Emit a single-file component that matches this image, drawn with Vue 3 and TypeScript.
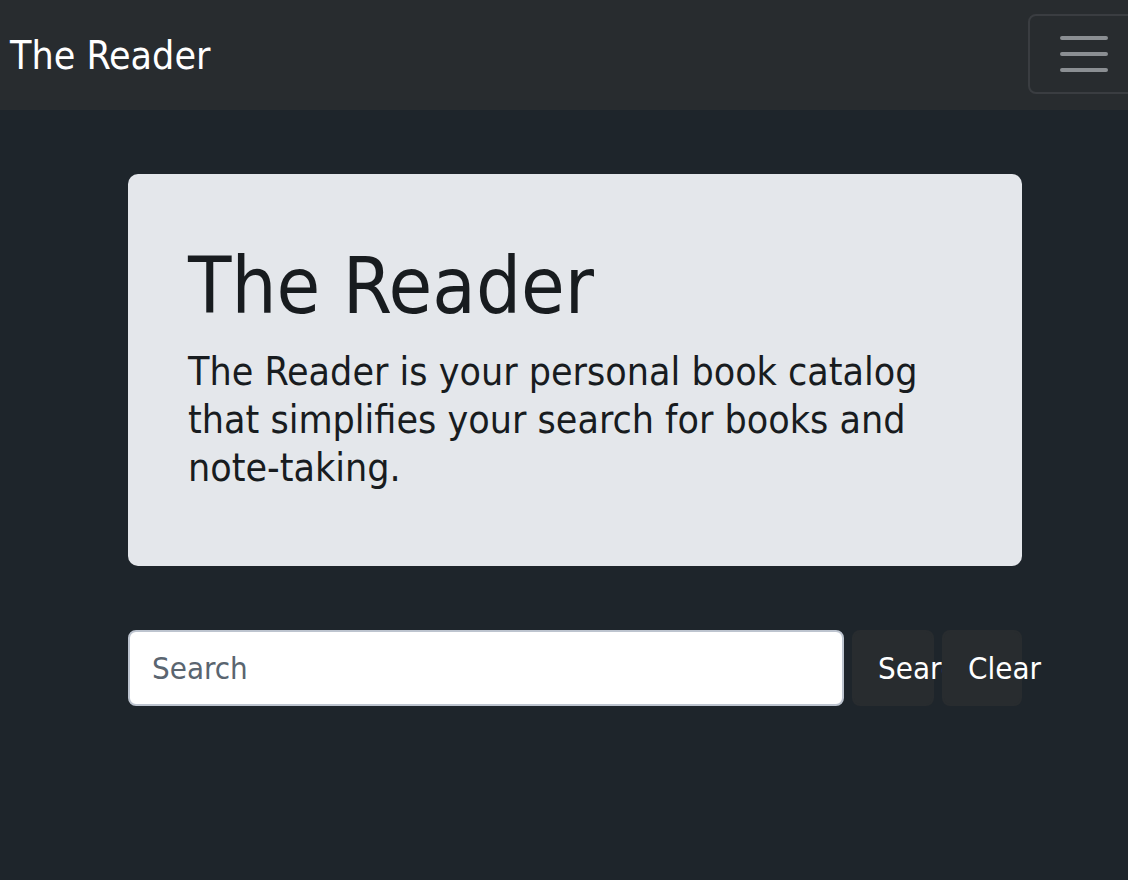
<script setup lang="ts">
import { ref } from 'vue'

const query = ref<string>('')

function clearQuery(): void {
  query.value = ''
}
</script>

<template>
  <div class="page">
    <header class="navbar">
      <a class="brand" href="#">The Reader</a>
      <button class="toggler" type="button" aria-label="Toggle navigation">
        <svg class="bars" viewBox="0 0 60 60" fill="none" stroke="#8b8f93" stroke-width="4" stroke-linecap="round" aria-hidden="true">
          <path d="M8 14H52M8 30H52M8 46H52" />
        </svg>
      </button>
    </header>

    <main class="content">
      <section class="hero">
        <h1>The Reader</h1>
        <p>The Reader is your personal book catalog that simplifies your search for books and note-taking.</p>
      </section>

      <form class="search" role="search" @submit.prevent>
        <input v-model="query" type="search" placeholder="Search" aria-label="Search" />
        <button class="action" type="submit">Search</button>
        <button class="action" type="button" @click="clearQuery">Clear</button>
      </form>
    </main>
  </div>
</template>

<style>
body {
  margin: 0;
  background: #1e252b;
}
</style>

<style scoped>
.page {
  min-height: 100vh;
  box-sizing: border-box;
  overflow: hidden;
  background: #1e252b;
  color: #181c1f;
  font-family: "DejaVu Sans Condensed", "DejaVu Sans", sans-serif;
}

.navbar {
  display: flex;
  align-items: center;
  justify-content: space-between;
  box-sizing: border-box;
  padding: 14px 0 16px 10px;
  background: #282c2f;
}

.brand {
  padding-top: 4px;
  color: #fff;
  font-size: 39px;
  line-height: 60px;
  text-decoration: none;
}

.toggler {
  display: flex;
  align-items: center;
  justify-content: center;
  box-sizing: border-box;
  flex: none;
  width: 112px;
  height: 80px;
  margin-right: -12px;
  padding: 0;
  border: 2px solid #3a3d41;
  border-radius: 8px;
  background: transparent;
}

.bars {
  width: 60px;
  height: 60px;
}

.content {
  padding: 64px 106px 64px 128px;
}

.hero {
  padding: 62px 60px 74px;
  border-radius: 10px;
  background: #e4e7eb;
}

h1 {
  margin: 0 0 12px;
  font-size: 79px;
  font-weight: 400;
  line-height: 100px;
}

p {
  margin: 0;
  font-size: 39px;
  line-height: 48px;
}

.search {
  display: grid;
  grid-template-columns: minmax(0, 1fr) 82px 80px;
  gap: 8px;
  margin-top: 64px;
}

.search input,
.action {
  box-sizing: border-box;
  min-width: 0;
  height: 76px;
  margin: 0;
  border-radius: 8px;
  font-family: inherit;
  font-size: 31px;
  line-height: 48px;
}

.search input {
  appearance: none;
  padding: 12px 22px;
  border: 2px solid #bdc4cf;
  background: #fff;
  color: #181c1f;
}

.search input::placeholder {
  color: #5a6570;
  opacity: 1;
}

.action {
  padding: 12px 24px;
  border: 2px solid #282c2f;
  background: #282c2f;
  color: #fff;
  text-align: left;
  white-space: nowrap;
}
</style>
